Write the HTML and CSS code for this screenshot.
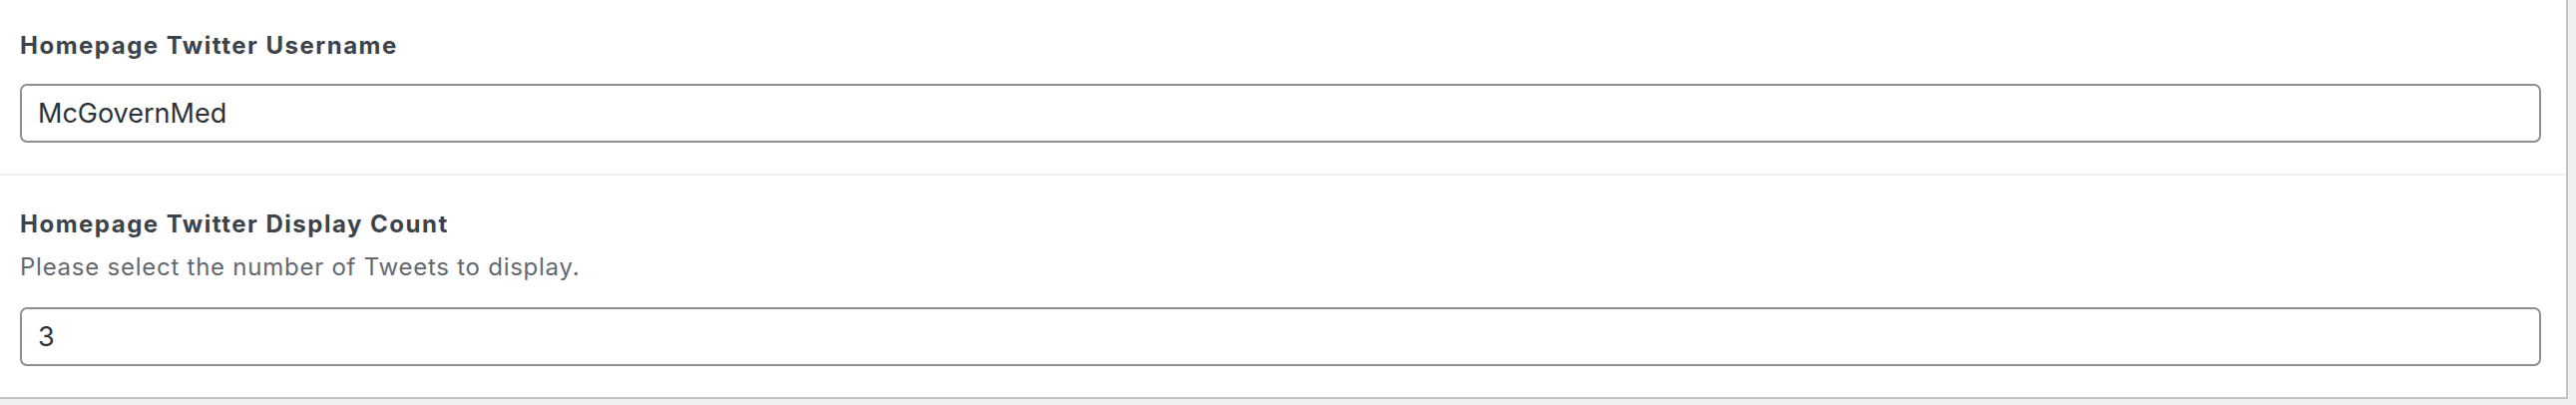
FILE: index.html
```html
<!DOCTYPE html>
<html lang="en">
<head>
<meta charset="utf-8">
<title>Twitter settings</title>
<link rel="stylesheet" href="styles.css">
</head>
<body>
<div class="panel">
  <div class="field">
    <label class="field-label" for="tw-user">Homepage Twitter Username</label>
    <input class="field-input" id="tw-user" type="text" value="McGovernMed">
  </div>
  <div class="field">
    <label class="field-label" for="tw-count">Homepage Twitter Display Count</label>
    <p class="field-desc">Please select the number of Tweets to display.</p>
    <input class="field-input" id="tw-count" type="text" value="3">
  </div>
</div>
</body>
</html>
```
FILE: styles.css
```css
html, body {
  margin: 0;
  padding: 0;
}
body {
  background: #f0f0f1;
  font-family: Inter, "Noto Sans", sans-serif;
  height: 406px;
  overflow: hidden;
}
.panel {
  width: 2574px;
  box-sizing: border-box;
  margin-top: -3px;
  background: #fff;
  border-right: 2px solid #c3c4c7;
  border-bottom: 2px solid #c3c4c7;
}
.field {
  display: flex;
  flex-direction: column;
  padding: 33px 25px 31px 20px;
  border-bottom: 2px solid #f0f0f1;
}
.field:last-child {
  border-bottom: none;
}
.field-label {
  display: block;
  font-size: 24px;
  font-weight: 700;
  letter-spacing: 1.5px;
  line-height: 32px;
  color: #3c434a;
  margin-bottom: 22px;
}
.field-desc {
  margin: -11px 0 24px;
  font-size: 24px;
  letter-spacing: 0.75px;
  line-height: 32px;
  color: #646970;
}
.field-input {
  box-sizing: border-box;
  width: 100%;
  height: 59px;
  margin: 0;
  padding: 0 16px;
  border: 2px solid #8c8f94;
  border-radius: 7px;
  background: #fff;
  font-family: Inter, "Noto Sans", sans-serif;
  font-size: 27px;
  color: #2c3338;
  outline: none;
}
```
